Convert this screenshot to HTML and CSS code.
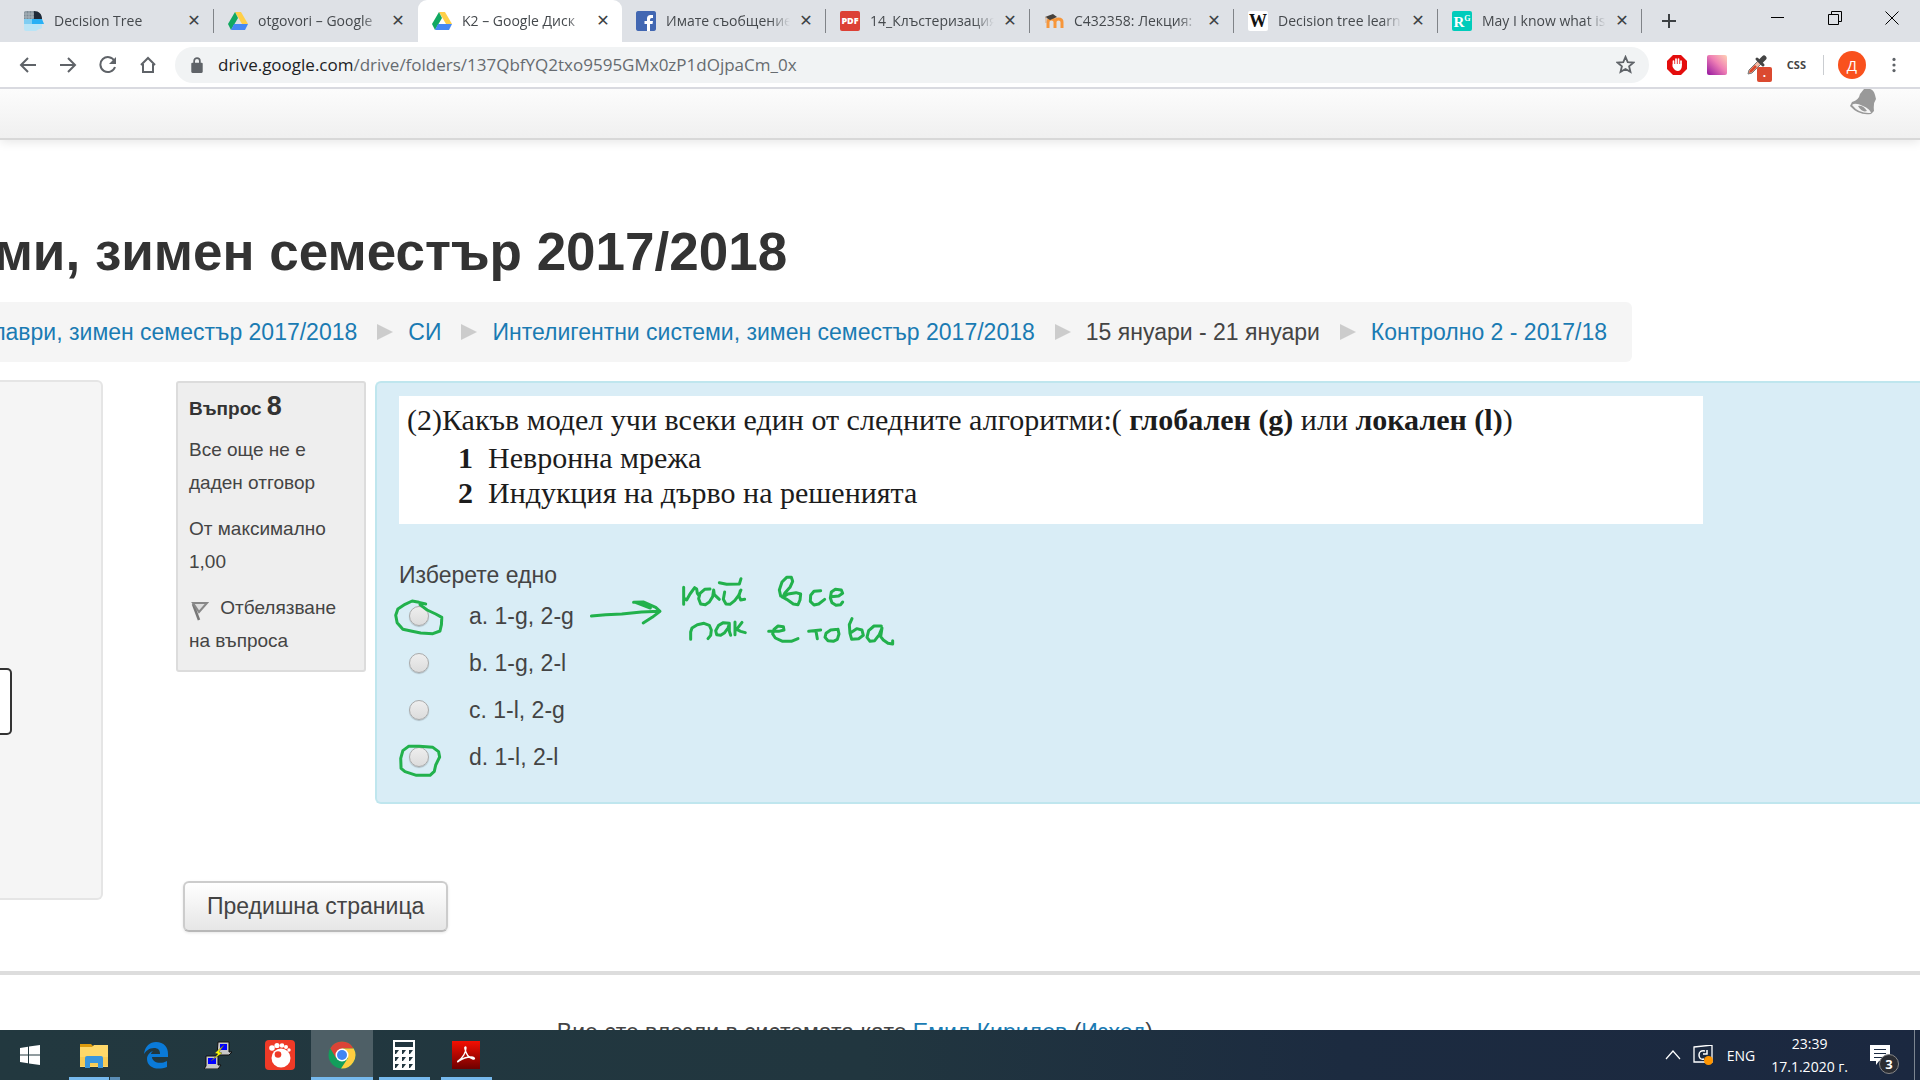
FILE: index.html
```html
<!DOCTYPE html>
<html lang="bg">
<head>
<meta charset="utf-8">
<title>K2 – Google Диск</title>
<link rel="stylesheet" href="styles.css">
</head>
<body>
<header class="browser">
  <div class="tabstrip">
    <div class="tab">
      <svg class="fav" viewBox="0 0 20 20"><path d="M0 0h10v8H0z" fill="#7d8a94"/><path d="M10 0c5 0 8 3 8 8h-8z" fill="#1f2a38"/><path d="M0 8h18l2 5H0z" fill="#29b0f5"/><path d="M0 8h8v5H0z" fill="#7fcdf2"/><path d="M0 13h18v3q0 2-3 2l-3 2H0z" fill="#b9e4f6"/><path d="M2 0v8M5 0v8M8 0v8M0 3h10M0 6h10" stroke="#a9b3ba" stroke-width="1"/></svg>
      <span class="title">Decision Tree</span><button class="x" aria-label="×">✕</button>
    </div>
    <div class="tab">
      <svg class="fav" viewBox="0 0 20 20"><path d="M7 1h6l7 12h-6z" fill="#ffcf48"/><path d="M7 1l3 6-7 12-3-6z" fill="#11a861"/><path d="M6 13h14l-3 6H3z" fill="#4688f4"/></svg>
      <span class="title">otgovori – Google</span><button class="x" aria-label="×">✕</button>
    </div>
    <div class="tab active">
      <svg class="fav" viewBox="0 0 20 20"><path d="M7 1h6l7 12h-6z" fill="#ffcf48"/><path d="M7 1l3 6-7 12-3-6z" fill="#11a861"/><path d="M6 13h14l-3 6H3z" fill="#4688f4"/></svg>
      <span class="title">K2 – Google Диск</span><button class="x" aria-label="×">✕</button>
    </div>
    <div class="tab">
      <svg class="fav" viewBox="0 0 20 20"><rect width="20" height="20" rx="1" fill="#4267b2"/><path d="M11 20v-7H8.500v-3H11V7.500Q11 4 14.500 4H17v3h-1.500Q14 7 14 8.500V10h3l-.5 3H14v7z" fill="#fff"/></svg>
      <span class="title">Имате съобщение</span><button class="x" aria-label="×">✕</button>
    </div>
    <div class="tab">
      <span class="fav pdf">PDF</span>
      <span class="title">14_Клъстеризация</span><button class="x" aria-label="×">✕</button>
    </div>
    <div class="tab">
      <svg class="fav" viewBox="0 0 20 20"><path d="M4 17V11q0-3 3.500-3t3.500 3v6M11 17v-6q0-3 3.500-3t3.500 3v6" fill="none" stroke="#f7963a" stroke-width="3"/><path d="M1 6l8-3 4 3-7 3z" fill="#45403c"/><path d="M2 6v6" stroke="#d9a77c"/></svg>
      <span class="title">C432358: Лекция:</span><button class="x" aria-label="×">✕</button>
    </div>
    <div class="tab">
      <span class="fav wiki">W</span>
      <span class="title">Decision tree learn</span><button class="x" aria-label="×">✕</button>
    </div>
    <div class="tab">
      <span class="fav rg">R<sup>G</sup></span>
      <span class="title">May I know what is</span><button class="x" aria-label="×">✕</button>
    </div>
    <button class="newtab" aria-label="+"><svg viewBox="0 0 16 16"><path d="M8 1v14M1 8h14" stroke="#3c4043" stroke-width="2"/></svg></button>
    <div class="wincontrols">
      <button aria-label="–"><svg viewBox="0 0 14 14"><path d="M0 6.500h13" stroke="#000"/></svg></button>
      <button aria-label="❐"><svg viewBox="0 0 14 14"><path d="M.5 3.500h10v10H.5zM3.500 3V.5h10v10H11" fill="none" stroke="#000"/></svg></button>
      <button aria-label="✕"><svg viewBox="0 0 14 14"><path d="M.5.5l13 13M13.500.5l-13 13" stroke="#000"/></svg></button>
    </div>
  </div>
  <div class="toolbar">
    <nav class="navbtns">
      <button aria-label="←"><svg viewBox="0 0 18 18"><path d="M17 9H2M9 2L2 9l7 7" /></svg></button>
      <button aria-label="→"><svg viewBox="0 0 18 18"><path d="M1 9h15M9 2l7 7-7 7"/></svg></button>
      <button aria-label="↻"><svg viewBox="0 0 18 18"><path d="M15.500 5A7.500 7.500 0 1 0 16 11"/><path d="M17 1v7h-7z" fill="#5f6368" stroke="none"/></svg></button>
      <button aria-label="⌂"><svg viewBox="0 0 18 18"><path d="M2 9l7-7 7 7M4 8v8h10V8"/></svg></button>
    </nav>
    <div class="omnibox">
      <svg class="lock" viewBox="0 0 12 14"><rect x="1" y="5" width="10" height="9" rx="1" fill="#5f6368"/><path d="M3.500 6V3.500a2.500 2.500 0 0 1 5 0V6" fill="none" stroke="#5f6368" stroke-width="1.500"/></svg>
      <span class="url"><b>drive.google.com</b>/drive/folders/137QbfYQ2txo9595GMx0zP1dOjpaCm_0x</span>
      <svg class="star" viewBox="0 0 18 18"><path d="M9 1.800l2.100 5 5.400.4-4.100 3.500 1.300 5.300L9 13.200 4.300 16l1.300-5.300L1.500 7.200l5.400-.4z" fill="none" stroke="#5f6368" stroke-width="1.700"/></svg>
    </div>
    <div class="exts">
      <svg viewBox="0 0 20 20"><path d="M6 0h8l6 6v8l-6 6H6l-6-6V6z" fill="#e40d0d"/><path d="M6.500 11V6M9 10V4M11.500 10V4M14 10V6" stroke="#fff" stroke-width="1.700" stroke-linecap="round"/><path d="M5.700 9h9.100v3q-1 4-4 4-3 0-5.100-4z" fill="#fff"/></svg>
      <span class="swatch"></span>
      <span class="picker"><svg viewBox="0 0 20 20"><path d="M1 19l1-4 9-9 3 3-9 9z" fill="#f2b9a4" stroke="#777"/><path d="M2 18l1-3 5-5 2 2-5 5z" fill="#d9482b"/><path d="M10 4l6 6" stroke="#444" stroke-width="3" stroke-linecap="round"/><path d="M14 6l3-3" stroke="#444" stroke-width="5" stroke-linecap="round"/></svg><i>.</i></span>
      <span class="css">CSS</span>
      <span class="sep"></span>
      <span class="avatar">Д</span>
      <svg class="dots" viewBox="0 0 20 20"><circle cx="10" cy="3" r="2"/><circle cx="10" cy="10" r="2"/><circle cx="10" cy="17" r="2"/></svg>
    </div>
  </div>
</header>

<main class="page">
  <div class="sitebar">
    <svg class="bell" viewBox="0 0 26 26"><path d="M14 0q9-2 11 6l1 4q-3 4-2 12l-3 3q-12 2-21-8l2-4q7-2 8-8z" fill="#999"/><path d="M2 16q3-3 11 1 7 3 8 7-12 1-19-8z" fill="#f5f5f5"/><path d="M8 17q5-1 9 5-5 2-9-5z" fill="#999"/></svg>
  </div>
  <h1 class="heading">ми, зимен семестър 2017/2018</h1>
  <nav class="crumbs">
    <a href="#">лаври, зимен семестър 2017/2018</a><i class="arrow"></i>
    <a href="#">СИ</a><i class="arrow"></i>
    <a href="#">Интелигентни системи, зимен семестър 2017/2018</a><i class="arrow"></i>
    <span>15 януари - 21 януари</span><i class="arrow"></i>
    <a href="#">Контролно 2 - 2017/18</a>
  </nav>
  <div class="columns">
    <aside class="block"><div class="qnbutton"></div></aside>
    <section class="quiz">
      <div class="que">
        <div class="info">
          <h3>Въпрос <span>8</span></h3>
          <p>Все още не е<br>даден отговор</p>
          <p>От максимално<br>1,00</p>
          <p><svg class="flag" viewBox="0 0 18 20"><path d="M2 3l6 16" stroke="#777" stroke-width="2.500"/><path d="M2 2h14l-8 9z" fill="#ddd" stroke="#888" stroke-width="2"/></svg> Отбелязване<br>на въпроса</p>
        </div>
        <div class="content">
          <div class="qtext">
            <p>(2)Какъв модел учи всеки един от следните алгоритми:( <b>глобален (g)</b> или <b>локален (l)</b>)</p>
            <div class="item"><b>1</b> Невронна мрежа</div>
            <div class="item"><b>2</b> Индукция на дърво на решенията</div>
          </div>
          <fieldset class="answers">
            <legend>Изберете едно</legend>
            <label><input type="radio" name="q8">a. 1-g, 2-g</label>
            <label><input type="radio" name="q8">b. 1-g, 2-l</label>
            <label><input type="radio" name="q8">c. 1-l, 2-g</label>
            <label><input type="radio" name="q8">d. 1-l, 2-l</label>
          </fieldset>
          <svg class="ink" viewBox="0 0 1568 810" preserveAspectRatio="none">
            <path d="M156 162L137 157 118 153 98 163 78 177 72 196 76 218 92 238 118 244 142 249 176 251 196 243 200 224 201 202 184 192 160 180 140 164"/>
            <path d="M108 589L138 589 176 592 192 605 195 621 184 645 180 664 168 676 130 676 98 665 87 655 86 625 92 602 108 589"/>
            <path d="M620 198L660 194 705 192 760 186 810 184M738 157L765 156 800 172 812 184 790 202 765 219M745 158L785 174"/>
            <g transform="translate(840 60) scale(.9333 1)">
              <path d="M41 52V103M41 84L50 90 60 72 74 53 80 57 82 70 88 78M120 57L104 58 90 70 86 86 92 102 106 104 118 96 128 80 131 60 133 74 148 88M164 66L160 88 168 102 180 103 194 92 206 76 213 60M211 62L207 78 212 90 224 88M148 38L170 43 208 42 213 26"/>
              <path d="M332 78L328 60 336 36 350 22 364 22 368 34 360 52 344 70 338 82 354 72 378 68 392 72 390 90 384 104 370 102 350 88 336 80M452 62L432 64 422 76 421 94 432 105 446 102 464 88M484 80L506 78 518 70 514 60 496 58 484 66 481 84 486 98 498 106 512 104 518 96"/>
              <path d="M62 208V186L66 174 82 164 102 160 118 166 124 180 122 196 114 206M178 160L160 158 146 166 137 182 140 194 152 196 164 188 174 174 178 162 178 184 182 196M195 156V194M216 157L200 178 212 184 226 188"/>
              <path d="M296 184H326L342 180 340 170 324 168 312 178 308 192 316 204 338 214 364 214 384 206M416 184L452 180M438 184L442 206M504 178L482 180 468 190 465 202 474 212 490 214 502 208 507 192 504 178M546 146L538 164 540 190 545 208 566 206 580 196 576 180 560 176 542 188M634 168L612 168 596 182 591 202 600 214 614 212 628 194 636 174 632 200 640 210 654 220 668 222V212"/>
            </g>
          </svg>
        </div>
      </div>
      <button class="prev">Предишна страница</button>
    </section>
  </div>
  <footer class="foot">Вие сте влезли в системата като <a href="#">Емил Кирилов</a> (<a href="#">Изход</a>)</footer>
</main>

<footer class="taskbar">
  <button class="task start" aria-label="⊞"><svg viewBox="0 0 20 20"><path d="M0 3l8-1.200V9.500H0zM9 1.600L20 0v9.500H9zM0 10.500h8v7.700L0 17zM9 10.500h11V20L9 18.400z" fill="#fff"/></svg></button>
  <button class="task open multi" aria-label="▤"><svg viewBox="0 0 28 28"><path d="M0 3h11l3 3v4H0z" fill="#dd9b0d"/><path d="M0 6h12l2-2h14v22H0z" fill="#ffd869"/><path d="M0 16h28v9H0z" fill="#f8cc55"/><path d="M5 27V17q0-2 2-2h14q2 0 2 2v10h-5v-5h-8v5z" fill="#3a96dd"/></svg></button>
  <button class="task" aria-label="e"><svg viewBox="0 0 28 28"><path d="M2 13C3 5 8 1 14 1c8 0 12 5 12 12v3H10c0 5 8 8 15 4v6C14 30 5 26 5 18c0-4 3-7 6-8-1 1-2 2-2 3h9c0-4-2-6-6-6-5 0-8 3-10 6z" fill="#0a7ad8"/></svg></button>
  <button class="task" aria-label="⚡"><svg viewBox="0 0 28 28"><path d="M14 1h11v10h3l-3 3H13z" fill="#c8c8c8" stroke="#111"/><path d="M16 3h7v6h-7z" fill="#00f"/><path d="M2 15h12v9h3l-3 4H0l2-3z" fill="#c8c8c8" stroke="#111"/><path d="M4 17h8v6H4z" fill="#00f"/><path d="M20 4l-9 8 3 1-7 7 11-8-3-1z" fill="#ff0" stroke="#553" stroke-width=".5"/></svg></button>
  <button class="task" aria-label="●"><svg class="big" viewBox="0 0 30 30"><rect width="30" height="30" rx="4" fill="#ef3a27"/><circle cx="16" cy="18" r="9.500" fill="#fff"/><circle cx="13" cy="14.500" r="3.300" fill="#ef3a27"/><g fill="#fff"><circle cx="7" cy="8" r="2.800"/><circle cx="12" cy="5.500" r="2.600"/><circle cx="17" cy="5.500" r="2.300"/><circle cx="21" cy="7" r="2"/><circle cx="24" cy="10" r="1.700"/></g></svg></button>
  <button class="task open current" aria-label="◉"><svg viewBox="0 0 28 28"><circle cx="14" cy="14" r="13.500" fill="#139e5b"/><path d="M2.300 7.200A13.500 13.500 0 0 1 25.700 7.500H14L8 17z" fill="#db4437"/><path d="M25.700 7.500A13.500 13.500 0 0 1 13 27.500L20 17 14 7.500z" fill="#ffcd40"/><circle cx="14" cy="14" r="6.500" fill="#fff"/><circle cx="14" cy="14" r="5" fill="#4285f4"/></svg></button>
  <button class="task open" aria-label="▦"><svg class="big" viewBox="0 0 30 30"><path d="M4 0h22v30H4z" fill="#fff"/><path d="M6 2h18v5H6zM6 10h4l-3 4H6zM13 10h4l-3 4h-1zM20 10h4l-3 4h-1zM6 17h4l-3 4H6zM13 17h4l-3 4h-1zM20 17h4l-3 4h-1zM6 24h4l-3 4H6zM13 24h4l-3 4h-1zM20 24h4l-3 4h-1z" fill="#22363f"/></svg></button>
  <button class="task open" aria-label="A"><svg viewBox="0 0 28 28"><defs><linearGradient id="pdfred" x2="0" y2="1"><stop offset="0" stop-color="#f40f02"/><stop offset="1" stop-color="#6e0000"/></linearGradient></defs><rect width="28" height="28" fill="url(#pdfred)"/><path d="M6 20c5-3 8-9 8-13 0-2-2-1-1 1 1 5 4 9 8 10 3 0 1-2-2-2-4 0-8 1-12 4-1 1-2 1-1 0z" fill="none" stroke="#fff" stroke-width="1.300"/></svg></button>
  <div class="tray">
    <svg class="chev" viewBox="0 0 16 16"><path d="M1 12l7-8 7 8" fill="none" stroke="#fff" stroke-width="1.200"/></svg>
    <svg class="upd" viewBox="0 0 20 20"><path d="M1 2l18-2v17H1z" fill="none" stroke="#fff" stroke-width="1.300"/><path d="M12 6q-6-1-6 4t5 4M10 9h4V5" fill="none" stroke="#fff" stroke-width="1.500"/><circle cx="15.500" cy="15.500" r="4.500" fill="#ff9500"/></svg>
    <span>ENG</span>
    <time>23:39<br>17.1.2020 г.</time>
    <span class="notif"><svg viewBox="0 0 20 20"><path d="M0 0h20v16H9l-3 4v-4H0z" fill="#fff"/><path d="M4 4.500h12M4 8.500h12M4 12.500h8" stroke="#1b2a41"/></svg><i>3</i></span>
  </div>
</footer>
</body>
</html>
```

FILE: styles.css
```css
* { box-sizing: border-box; }

body {
  margin: 0;
  height: 100vh;
  display: flex;
  flex-direction: column;
  overflow: hidden;
  background: #fff;
  color: #444;
  font: 23px/34px "Liberation Sans", Arial, sans-serif;
}

button {
  margin: 0;
  padding: 0;
  border: 0;
  background: none;
  color: inherit;
  font: inherit;
}

svg { display: block; flex: none; }
i { font-style: normal; }
a { color: #1a7bb3; text-decoration: none; }
p, h1, h3 { margin: 0; }

/* Browser chrome */
.browser, .taskbar { font-family: "Open Sans", "Noto Sans", sans-serif; flex: none; }
.tabstrip {
  display: flex;
  align-items: center;
  height: 42px;
  padding-left: 10px;
  background: #dee1e6;
}
.tab {
  display: flex;
  align-items: center;
  flex: 0 1 204px;
  min-width: 0;
  height: 24px;
  padding: 0 11px 0 14px;
  gap: 8px;
  border-right: 1px solid #808388;
  color: #45494d;
  font-size: 14px;
  line-height: 20px;
}
.tab:nth-child(2) { border-right-color: transparent; }
.tab.active {
  height: 42px;
  border-right: 0;
  border-radius: 9px 9px 0 0;
  background: #fff;
}
.fav { flex: none; width: 20px; height: 20px; border-radius: 2px; text-align: center; }
.pdf { background: #dc4035; color: #fff; font-size: 9px; font-weight: 800; }
.wiki { background: #fff; color: #111; font: bold 18px/20px "Liberation Serif", serif; }
.rg { background: #00ccbb; color: #fff; font: bold 15px/22px "Liberation Serif", serif; }
.rg sup { font-size: 8px; line-height: 1px; }
.title {
  flex: 1;
  margin-left: 2px;
  overflow: hidden;
  white-space: nowrap;
  -webkit-mask-image: linear-gradient(90deg, #000 84%, transparent);
  mask-image: linear-gradient(90deg, #000 84%, transparent);
}
.x { width: 16px; color: #3c4043; font: bold 16px/20px "DejaVu Sans", sans-serif; }
.newtab { margin-left: 19px; }
.newtab svg { width: 16px; height: 16px; }
.wincontrols { display: flex; margin-left: auto; padding-bottom: 6px; }
.wincontrols button { display: flex; justify-content: center; width: 57px; }
.wincontrols svg { width: 14px; height: 14px; }

.toolbar {
  display: flex;
  align-items: center;
  height: 47px;
  padding: 0 18px 0 8px;
  border-bottom: 2px solid #d9dae0;
}
.navbtns { display: flex; width: 167px; }
.navbtns button { display: flex; justify-content: center; width: 40px; }
.navbtns svg { width: 18px; height: 18px; fill: none; stroke: #5f6368; stroke-width: 2; }
.omnibox {
  display: flex;
  align-items: center;
  flex: 1;
  height: 36px;
  padding: 0 14px 0 15px;
  border-radius: 18px;
  background: #f1f3f4;
  color: #666b70;
  font-size: 17px;
  line-height: 24px;
}
.omnibox b { color: #202124; font-weight: 400; }
.lock { width: 14px; height: 16px; margin-right: 14px; }
.star { width: 19px; height: 19px; margin-left: auto; }
.exts { display: flex; align-items: center; gap: 20px; padding-left: 18px; }
.exts svg { width: 20px; height: 20px; }
.swatch {
  width: 20px;
  height: 20px;
  border-radius: 2px;
  background: linear-gradient(45deg, #9416a0, #ef7fb4 55%, #ffd3b5);
}
.picker { position: relative; }
.picker i {
  position: absolute;
  left: 10px;
  top: 12px;
  width: 15px;
  height: 15px;
  border-radius: 2px;
  background: #db4a30;
  color: #fff;
  font: bold 12px/12px "Liberation Sans", sans-serif;
  text-align: center;
}
.css { color: #444; font-size: 11px; font-weight: 700; line-height: 16px; }
.sep { width: 1px; height: 20px; margin: 0 -6px 0 -3px; background: #cacdd1; }
.avatar {
  width: 28px;
  height: 28px;
  border-radius: 50%;
  background: #f9511d;
  color: #fff;
  font-size: 15px;
  line-height: 28px;
  text-align: center;
}
.exts .dots { width: 16px; height: 16px; fill: #5f6368; }

/* Course page */
.page { flex: 1; min-height: 0; overflow: hidden; }
.sitebar {
  display: flex;
  justify-content: flex-end;
  height: 51px;
  padding-right: 44px;
  border-bottom: 2px solid #d8d8d8;
  background: linear-gradient(#fcfcfc, #f0f0f0);
  box-shadow: 0 2px 10px #0000001a;
}
.bell { width: 26px; height: 26px; }
.heading {
  display: flex;
  justify-content: flex-end;
  width: 41%;
  margin: 82px 0 20px;
  color: #333;
  font-size: 53px;
  line-height: 60px;
  white-space: nowrap;
}
.crumbs {
  display: flex;
  align-items: center;
  justify-content: flex-end;
  height: 60px;
  margin: 0 15% 0 0;
  padding-right: 25px;
  border-radius: 0 6px 6px 0;
  background: #f5f5f5;
  white-space: nowrap;
}
.arrow {
  margin: 0 15px 0 20px;
  border: 8px solid transparent;
  border-left: 16px solid #ccc;
  border-right: 0;
}
.columns { display: flex; align-items: flex-start; padding-top: 18px; }
.block {
  flex: none;
  width: 103px;
  height: 520px;
  margin-right: 73px;
  padding-top: 286px;
  border: 2px solid #e5e5e5;
  border-left: 0;
  border-radius: 0 6px 6px 0;
  background: #f5f5f5;
}
.qnbutton {
  width: 12px;
  height: 67px;
  border: 2px solid #333;
  border-left: 0;
  border-radius: 0 5px 5px 0;
  background: #fff;
}
.quiz { flex: 1; min-width: 0; padding-top: 1px; }
.que { display: flex; align-items: flex-start; gap: 9px; }
.info {
  flex: none;
  width: 190px;
  padding: 7px 6px 0 11px;
  border: 2px solid #dcdcdc;
  border-radius: 3px;
  background: #eee;
  font-size: 19px;
  line-height: 33px;
}
.info h3 { color: #333; font-size: 19px; line-height: 33px; }
.info h3 span { font-size: 27px; }
.info p { margin: 8px 0 13px; }
.flag { display: inline-block; width: 18px; height: 22px; margin: 0 6px -8px 2px; }
.content {
  position: relative;
  flex: 1;
  padding: 13px 22px 22px;
  border: 2px solid #bfe6ee;
  border-right: 0;
  border-radius: 6px 0 0 6px;
  background: #d9edf6;
}
.qtext {
  width: 87%;
  height: 128px;
  padding: 6px 8px;
  background: #fff;
  color: #1c1c1c;
  font: 30px/35px "Liberation Serif", "Times New Roman", serif;
  white-space: nowrap;
}
.item { display: flex; gap: 15px; padding-left: 51px; }
.qtext p { padding-bottom: 3px; }
.answers { margin: 34px 0 0; padding: 0; border: 0; }
.answers legend { padding: 0; }
.answers label { display: flex; align-items: center; height: 47px; }
.answers input {
  appearance: none;
  width: 20px;
  height: 20px;
  margin: 0 40px 0 10px;
  border: 1px solid #aaa;
  border-radius: 50%;
  background: linear-gradient(#eee, #dcdcdc);
  box-shadow: 0 1px 1px #0003;
}
.ink {
  position: absolute;
  left: -7px;
  top: 167px;
  width: 560px;
  height: 270px;
  pointer-events: none;
}
.ink path {
  fill: none;
  stroke: #22b14c;
  stroke-width: 3px;
  stroke-linecap: round;
  stroke-linejoin: round;
  vector-effect: non-scaling-stroke;
}
.prev {
  display: block;
  margin: 77px 0 39px 7px;
  padding: 6px 22px 7px;
  border: 2px solid #ccc;
  border-bottom-color: #b8b8b8;
  border-radius: 6px;
  background: linear-gradient(#fff, #e6e6e6);
  box-shadow: 0 1px 3px #0000001a;
}
.foot { padding: 40px 0 0 29%; border-top: 4px solid #ddd; }

/* Taskbar */
.taskbar {
  display: flex;
  height: 50px;
  background: linear-gradient(90deg, #22383f, #21363f 45%, #1c2b40 70%, #1b2840);
  color: #fff;
}
.task {
  display: flex;
  align-items: center;
  justify-content: center;
  position: relative;
  width: 62px;
}
.task svg { width: 28px; height: 28px; }
.task svg.big { width: 30px; height: 30px; }
.task.start { width: 63px; padding-right: 3px; }
.task.start svg { width: 20px; height: 20px; }
.task.open::after {
  content: "";
  position: absolute;
  left: 6px;
  right: 5px;
  bottom: 0;
  height: 3px;
  background: #76b9ed;
}
.task.multi::after { background: linear-gradient(90deg, #76b9ed 40px, #22383f 40px 41px, #5a8db5 41px); }
.task.current { background: #4e5f66; }
.task.current::after { left: 0; right: 0; }
.tray {
  display: flex;
  align-items: center;
  margin-left: auto;
  margin-right: 5px;
  padding-right: 24px;
  border-right: 1px solid #7c8591;
  font-size: 14px;
  line-height: 23px;
}
.chev { width: 16px; height: 16px; }
.upd { width: 20px; height: 20px; margin: 0 14px 0 12px; }
.tray time { margin: 0 22px 0 16px; text-align: center; }
.notif { position: relative; }
.notif svg { width: 20px; height: 20px; }
.notif i {
  position: absolute;
  left: 9px;
  top: 9px;
  width: 20px;
  height: 20px;
  border: 1px solid #888;
  border-radius: 50%;
  background: #2b2d33;
  font-weight: 700;
  font-size: 13px;
  line-height: 18px;
  text-align: center;
}
```
